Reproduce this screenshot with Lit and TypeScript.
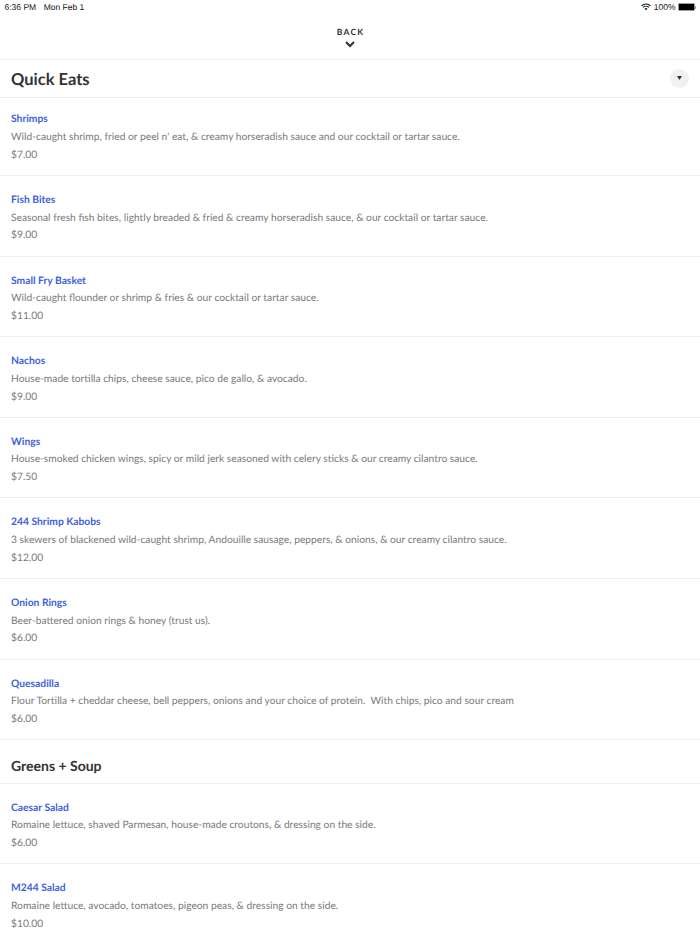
import { LitElement, html, css } from 'lit';
import { customElement } from 'lit/decorators.js';

interface MenuItem {
  name: string;
  desc: string;
  price: string;
}

const quickEats: MenuItem[] = [
  { name: 'Shrimps', desc: "Wild-caught shrimp, fried or peel n' eat, & creamy horseradish sauce and our cocktail or tartar sauce.", price: '$7.00' },
  { name: 'Fish Bites', desc: 'Seasonal fresh fish bites, lightly breaded & fried & creamy horseradish sauce, & our cocktail or tartar sauce.', price: '$9.00' },
  { name: 'Small Fry Basket', desc: 'Wild-caught flounder or shrimp & fries & our cocktail or tartar sauce.', price: '$11.00' },
  { name: 'Nachos', desc: 'House-made tortilla chips, cheese sauce, pico de gallo, & avocado.', price: '$9.00' },
  { name: 'Wings', desc: 'House-smoked chicken wings, spicy or mild jerk seasoned with celery sticks & our creamy cilantro sauce.', price: '$7.50' },
  { name: '244 Shrimp Kabobs', desc: '3 skewers of blackened wild-caught shrimp, Andouille sausage, peppers, & onions, & our creamy cilantro sauce.', price: '$12.00' },
  { name: 'Onion Rings', desc: 'Beer-battered onion rings & honey (trust us).', price: '$6.00' },
  { name: 'Quesadilla', desc: 'Flour Tortilla + cheddar cheese, bell peppers, onions and your choice of protein.\u00a0 With chips, pico and sour cream', price: '$6.00' },
];

const greens: MenuItem[] = [
  { name: 'Caesar Salad', desc: 'Romaine lettuce, shaved Parmesan, house-made croutons, & dressing on the side.', price: '$6.00' },
  { name: 'M244 Salad', desc: 'Romaine lettuce, avocado, tomatoes, pigeon peas, & dressing on the side.', price: '$10.00' },
];

@customElement('app-root')
export class AppRoot extends LitElement {
  static styles = css`
    :host {
      display: block;
      height: 934px;
      overflow: hidden;
      background: #fff;
      font-family: Lato, sans-serif;
      text-rendering: geometricPrecision;
    }
    .status {
      display: flex;
      justify-content: space-between;
      align-items: center;
      height: 14px;
      padding: 0 4px 0 4.5px;
      font-family: 'Liberation Sans', sans-serif;
      font-size: 8.5px;
      color: #111;
    }
    .status .left { display: flex; gap: 7.5px; }
    .status .right { display: flex; align-items: center; gap: 2.5px; }
    .battery { display: flex; align-items: center; }
    .battery .body {
      width: 15px;
      height: 6.5px;
      background: #000;
      border: 0.5px solid #999;
      border-radius: 1.5px;
    }
    .battery .tip { width: 1px; height: 3px; background: #999; }
    .back {
      display: flex;
      flex-direction: column;
      align-items: center;
      height: 45.6px;
      box-sizing: border-box;
      padding-top: 13px;
      border-bottom: 1px solid #efefef;
      color: #333;
    }
    .back span {
      font-size: 8.5px;
      font-weight: 700;
      letter-spacing: 1.2px;
      line-height: 11px;
      margin-right: -1.2px;
    }
    .back svg { margin-top: 3px; }
    .section {
      display: flex;
      justify-content: space-between;
      align-items: center;
      box-sizing: border-box;
      padding: 0 11px;
      border-bottom: 1px solid #efefef;
      color: #333;
      font-weight: 700;
    }
    .first { height: 38px; font-size: 16.5px; padding-top: 2px; }
    .first .toggle { margin-top: -2px; }
    .second { height: 43.4px; font-size: 14px; padding-top: 9px; }
    .toggle {
      display: flex;
      align-items: center;
      justify-content: center;
      width: 19px;
      height: 19px;
      border-radius: 50%;
      background: #f1f1f1;
    }
    .row {
      box-sizing: border-box;
      height: 80.6px;
      padding: 16px 11px 0;
      border-bottom: 1px solid #efefef;
      font-size: 10.25px;
      line-height: 17.7px;
      color: #7a7a7a;
      white-space: nowrap;
    }
    .first + .row { height: 78.4px; padding-top: 13.5px; }
    .row:last-child { border-bottom: none; }
    .name { color: #3f5fe0; font-weight: 700; font-size: 10.3px; }
  `;

  renderRow(item: MenuItem) {
    return html`
      <div class="row">
        <div class="name">${item.name}</div>
        <div>${item.desc}</div>
        <div>${item.price}</div>
      </div>
    `;
  }

  render() {
    return html`
      <div class="status">
        <div class="left"><span>6:36 PM</span><span>Mon Feb 1</span></div>
        <div class="right">
          <svg width="10" height="8" viewBox="0 0 11 8" fill="none" stroke="#111" stroke-width="1.2">
            <path d="M.6 2.7a7 7 0 0 1 9.8 0" />
            <path d="M2.3 4.4a4.6 4.6 0 0 1 6.4 0" />
            <path d="M5.5 7.6 3.9 6a2.3 2.3 0 0 1 3.2 0z" fill="#111" stroke="none" />
          </svg>
          <span>100%</span>
          <div class="battery"><div class="body"></div><div class="tip"></div></div>
        </div>
      </div>
      <div class="back">
        <span>BACK</span>
        <svg width="10" height="7" viewBox="0 0 10 7" fill="none" stroke="#333" stroke-width="2">
          <path d="M1 1l4 4 4-4" />
        </svg>
      </div>
      <div class="section first">
        <span>Quick Eats</span>
        <div class="toggle">
          <svg width="5" height="4" viewBox="0 0 5 4"><path d="M0 0h5L2.5 4z" fill="#333" /></svg>
        </div>
      </div>
      ${quickEats.map((item) => this.renderRow(item))}
      <div class="section second"><span>Greens + Soup</span></div>
      ${greens.map((item) => this.renderRow(item))}
    `;
  }
}
